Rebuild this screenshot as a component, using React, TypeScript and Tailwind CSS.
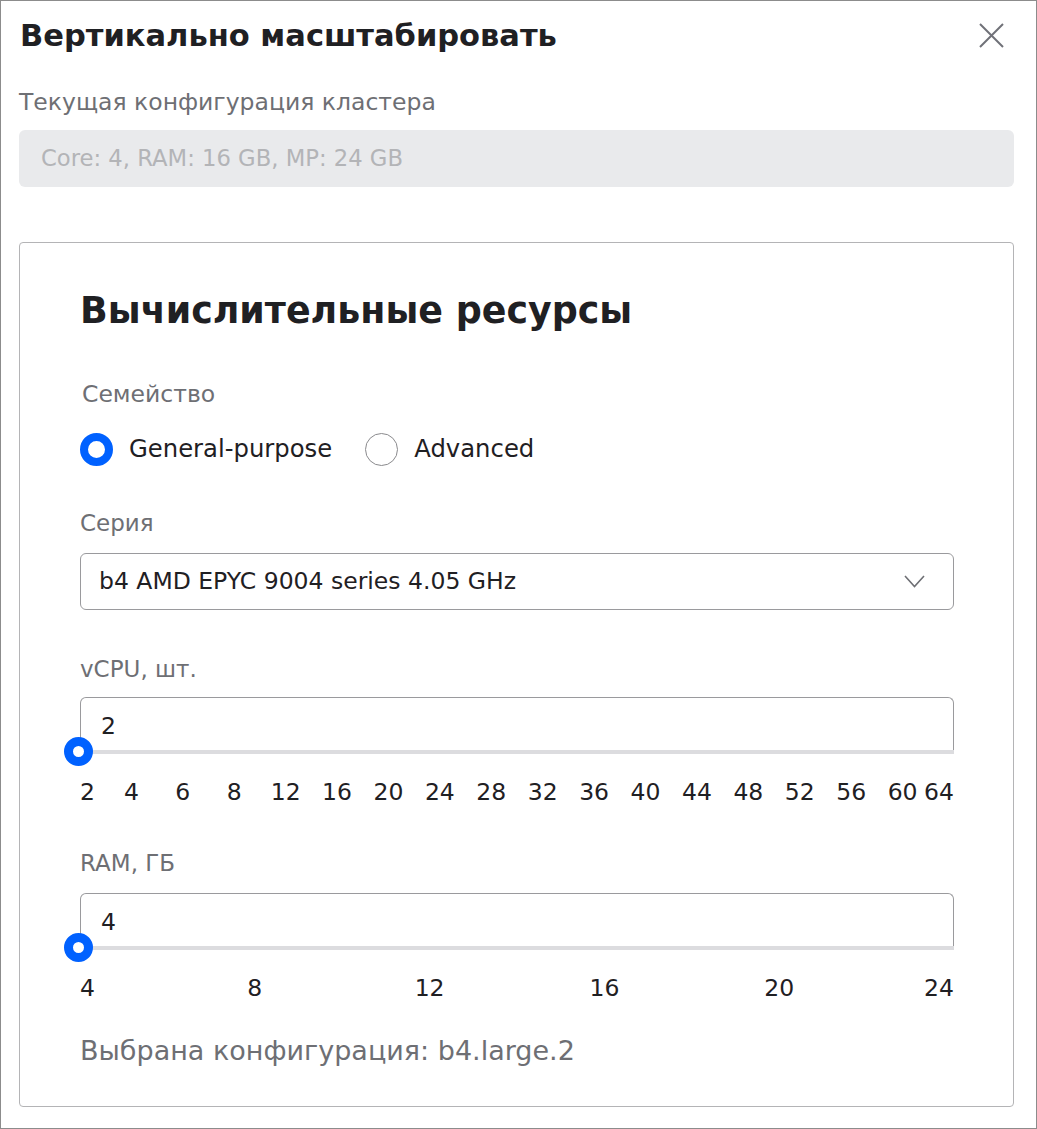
import React from 'react';

const cpuMarks = [2, 4, 6, 8, 12, 16, 20, 24, 28, 32, 36, 40, 44, 48, 52, 56, 60, 64];
const ramMarks = [4, 8, 12, 16, 20, 24];

const SliderField: React.FC<{ label: string; value: string; marks: number[]; wide?: boolean }> = ({ label, value, marks, wide }) => {
  const last = marks.length - 1;
  return (
    <div>
      <div className="text-[23px] leading-[30px] text-[#6e6f74]">{label}</div>
      <div className={wide ? 'relative mt-[15px]' : 'relative mt-[13px]'}>
        <div className="h-[53px] rounded-t-[6px] border border-b-0 border-[#9a9a9d] px-[20px] pt-[13px] text-[23.5px] leading-[30px] text-[#1f2023]">
          {value}
        </div>
        <div className="h-[4px] bg-[#dcdcdf]" />
        <div className="absolute left-[-16px] top-[40px] h-[29px] w-[29px] rounded-full border-[9px] border-[#0061ff] bg-white" />
      </div>
      <div className="relative mt-[23px] h-[30px] text-[23.5px] leading-[30px] text-[#1f2023]">
        {marks.map((m, i) => {
          if (i === 0) return <span key={m} className="absolute left-0 top-0">{m}</span>;
          if (i === last) return <span key={m} className="absolute right-0 top-0">{m}</span>;
          return (
            <span key={m} className="absolute top-0 -translate-x-1/2" style={{ left: `${(i / last) * 100}%` }}>
              {m}
            </span>
          );
        })}
      </div>
    </div>
  );
};

export default function App() {
  return (
    <div className="h-[1129px] w-[1037px] border border-[#8c8c8c] bg-white font-['DejaVu_Sans',sans-serif]">
      {/* header */}
      <div className="flex items-start justify-between pl-[19px] pr-[32px] pt-[15px]">
        <h1 className="text-[30.5px] font-bold leading-[40px] text-[#1f2023]">Вертикально масштабировать</h1>
        <svg width="25" height="25" viewBox="0 0 25 25" className="mt-[7px]" fill="none" stroke="#707178" strokeWidth="2">
          <path d="M1 1L24 24M24 1L1 24" />
        </svg>
      </div>

      <div className="ml-[18px] mr-[22px]">
        <div className="mt-[31px] text-[23.5px] leading-[30px] text-[#6e6f74]">Текущая конфигурация кластера</div>
        <div className="mt-[13px] flex h-[57px] items-center rounded-[6px] bg-[#e9eaec] px-[22px] text-[22.7px] text-[#b3b4b7]">
          Core: 4, RAM: 16 GB, MP: 24 GB
        </div>
      </div>

      {/* card */}
      <div className="ml-[18px] mr-[22px] mt-[55px] rounded-[4px] border border-[#b4b4b6] pb-[38px] pl-[60px] pr-[59px] pt-[45px]">
        <h2 className="text-[36.4px] font-bold leading-[46px] text-[#1f2023]">Вычислительные ресурсы</h2>

        <div className="mt-[45px] pl-[2px] text-[23.5px] leading-[30px] text-[#6e6f74]">Семейство</div>
        <div className="mt-[24px] flex h-[33px] items-center text-[24.3px] text-[#1f2023]">
          <span className="h-[33px] w-[33px] rounded-full border-[8px] border-[#0061ff] bg-white" />
          <span className="ml-[16px]">General-purpose</span>
          <span className="ml-[33px] h-[33px] w-[33px] rounded-full border border-[#8a8a8d] bg-white" />
          <span className="ml-[16px]">Advanced</span>
        </div>

        <div className="mt-[42px] text-[23px] leading-[30px] text-[#6e6f74]">Серия</div>
        <div className="mt-[15px] flex h-[57px] items-center justify-between rounded-[6px] border border-[#9a9a9d] pl-[18px] pr-[28px] text-[23.5px] text-[#1f2023]">
          <span>b4 AMD EPYC 9004 series 4.05 GHz</span>
          <svg width="21" height="13" viewBox="0 0 21 13" fill="none" stroke="#6e6f74" strokeWidth="1.6">
            <path d="M1 1L10.5 11.5L20 1" />
          </svg>
        </div>

        <div className="mt-[44px]">
          <SliderField label="vCPU, шт." value="2" marks={cpuMarks} />
        </div>
        <div className="mt-[41px]">
          <SliderField label="RAM, ГБ" value="4" marks={ramMarks} wide />
        </div>

        <div className="mt-[31px] text-[27px] leading-[34px] text-[#6e6f74]">Выбрана конфигурация: b4.large.2</div>
      </div>
    </div>
  );
}
